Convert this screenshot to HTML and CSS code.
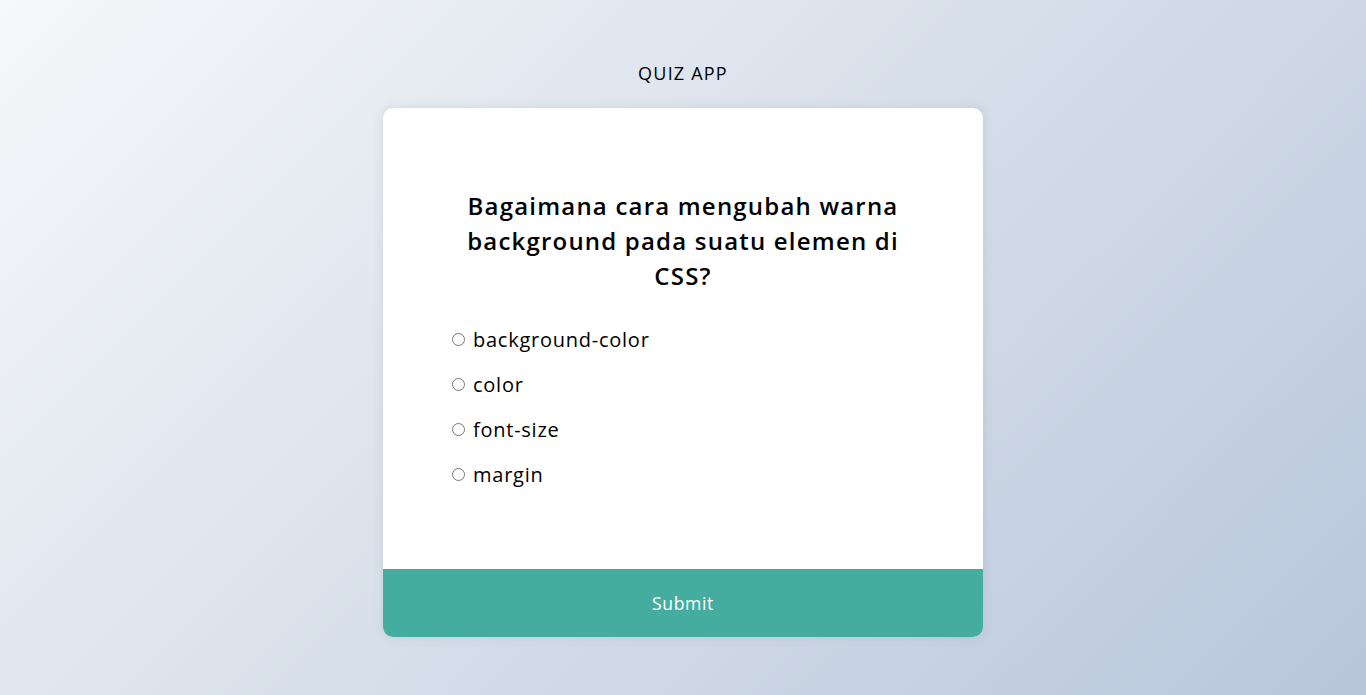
FILE: index.html
```html
<!DOCTYPE html>
<html lang="id">
<head>
<meta charset="UTF-8">
<title>Quiz App</title>
<link rel="stylesheet" href="styles.css">
</head>
<body>
  <h1 class="app-title">QUIZ APP</h1>
  <div class="quiz-container">
    <div class="quiz-header">
      <h2 class="question">Bagaimana cara mengubah warna background pada suatu elemen di CSS?</h2>
      <ul class="answers">
        <li><input type="radio" name="answer" id="a" class="answer"><label for="a">background-color</label></li>
        <li><input type="radio" name="answer" id="b" class="answer"><label for="b">color</label></li>
        <li><input type="radio" name="answer" id="c" class="answer"><label for="c">font-size</label></li>
        <li><input type="radio" name="answer" id="d" class="answer"><label for="d">margin</label></li>
      </ul>
    </div>
    <button class="submit">Submit</button>
  </div>
</body>
</html>
```

FILE: styles.css
```css
* { box-sizing: border-box; }
html, body { height: 100%; }
body {
  margin: 0;
  font-family: "Open Sans", "Noto Sans", sans-serif;
  background: linear-gradient(135deg, #f6f8fa 0%, #b8c6db 100%);
  display: flex;
  flex-direction: column;
  align-items: center;
  padding-top: 60px;
  color: #000;
}
.app-title {
  margin: 0 0 22px;
  font-size: 18px;
  font-weight: 400;
  line-height: 26px;
  letter-spacing: 1.2px;
}
.quiz-container {
  width: 600px;
  background: #fff;
  border-radius: 10px;
  box-shadow: 0 0 10px 2px rgba(100, 100, 100, 0.1);
  overflow: hidden;
}
.quiz-header { padding: 64px; }
.question {
  margin: 0;
  padding: 16px;
  text-align: center;
  font-size: 24px;
  font-weight: 600;
  line-height: 35px;
  letter-spacing: 1.2px;
}
.answers { list-style: none; padding: 0; margin: 0; }
.answers li {
  margin: 16px 0;
  font-size: 20px;
  line-height: 29px;
  letter-spacing: 0.75px;
  display: flex;
  align-items: center;
}
.answer { margin: 0 8px 0 5px; width: 13px; height: 13px; }
.submit {
  display: block;
  width: 100%;
  border: none;
  background: #44ad9f;
  color: #fff;
  font-family: inherit;
  font-size: 17.6px;
  line-height: 26px;
  letter-spacing: 0.6px;
  padding: 21px 0;
  cursor: pointer;
}
```
